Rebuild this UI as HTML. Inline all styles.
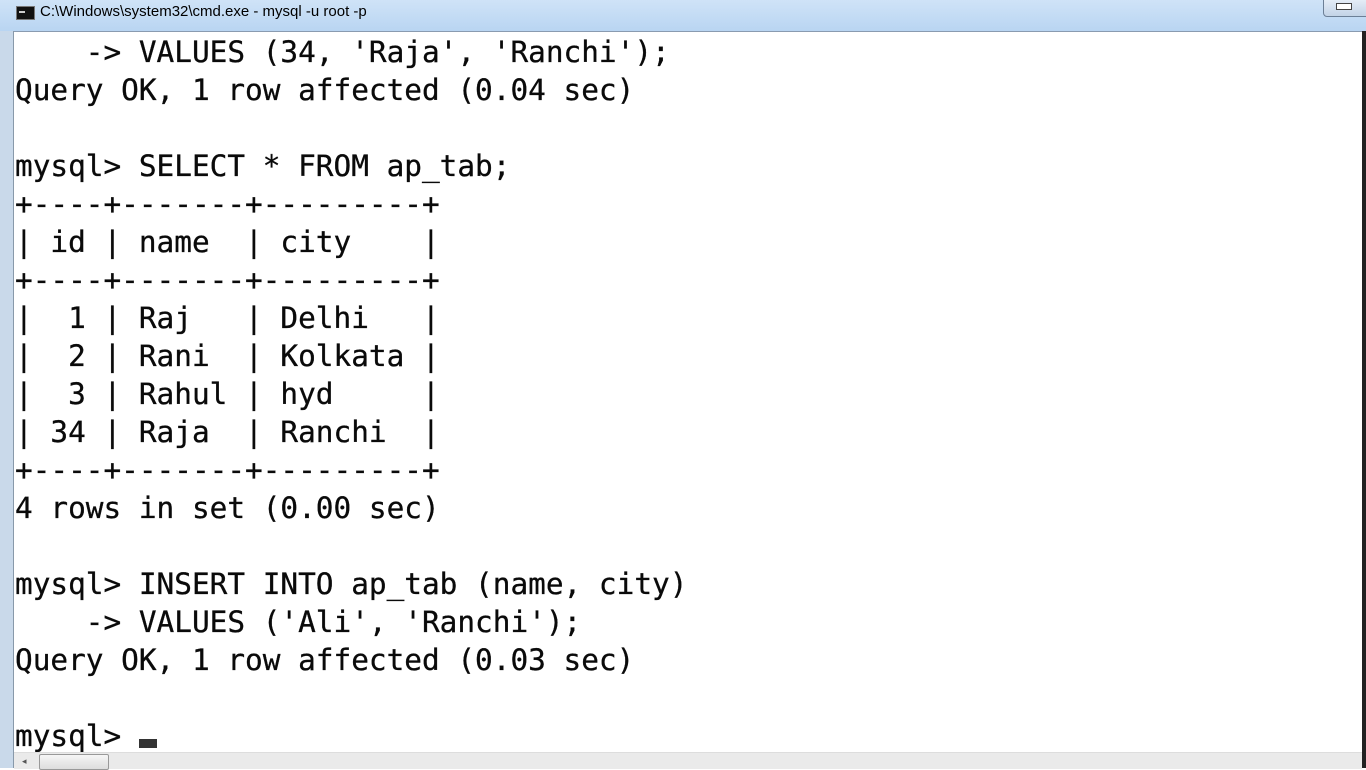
<!DOCTYPE html>
<html><head><style>
html,body{margin:0;padding:0;width:1366px;height:768px;overflow:hidden;background:#fff}
.title{position:absolute;left:0;top:0;width:1366px;height:31px;background:linear-gradient(#cfe3f7,#b9d5f2);border-bottom:1px solid #8a9bb0}
.title span{position:absolute;left:40px;top:3px;font:15px "Liberation Sans",sans-serif;color:#000}
.icon{position:absolute;left:16px;top:6px;width:17px;height:12px;background:#111;border:1px solid #777}
.icon:after{content:"";position:absolute;left:2px;top:4px;width:6px;height:2px;background:#ccc}
.btn{position:absolute;left:1323px;top:-2px;width:45px;height:17px;border:1px solid #6c7f96;border-radius:0 0 4px 4px;background:linear-gradient(#e6eef8,#c3d3e6)}
.btn:after{content:"";position:absolute;left:12px;top:4px;width:14px;height:5px;border:1px solid #444;background:#fff}
.lb{position:absolute;left:0;top:31px;width:13px;height:737px;background:#c9d9ea;border-right:1px solid #8899aa}
.rb{position:absolute;right:0;top:31px;width:4px;height:737px;background:#222}
pre{position:absolute;left:15px;top:33px;margin:0;font:29.4px/38px "DejaVu Sans Mono",monospace;color:#0a0a0a;-webkit-text-stroke:0.3px #0a0a0a}
.cur{display:inline-block;width:18px;height:9px;background:#333;vertical-align:-2px}
.sb{position:absolute;left:14px;top:752px;width:1348px;height:16px;background:#eaeaea;border-top:1px solid #ddd}
.thumb{position:absolute;left:39px;top:754px;width:68px;height:14px;background:linear-gradient(#f6f6f6,#ddd);border:1px solid #999;border-radius:2px}
.arr{position:absolute;left:22px;top:756px;font:9px sans-serif;color:#555}
</style></head><body>
<div class="title"><div class="icon"></div><span>C:\Windows\system32\cmd.exe - mysql  -u root -p</span><div class="btn"></div></div>
<div class="lb"></div><div class="rb"></div>
<pre>    -&gt; VALUES (34, 'Raja', 'Ranchi');
Query OK, 1 row affected (0.04 sec)

mysql&gt; SELECT * FROM ap_tab;
+----+-------+---------+
| id | name  | city    |
+----+-------+---------+
|  1 | Raj   | Delhi   |
|  2 | Rani  | Kolkata |
|  3 | Rahul | hyd     |
| 34 | Raja  | Ranchi  |
+----+-------+---------+
4 rows in set (0.00 sec)

mysql&gt; INSERT INTO ap_tab (name, city)
    -&gt; VALUES ('Ali', 'Ranchi');
Query OK, 1 row affected (0.03 sec)

mysql&gt; <span class="cur"></span></pre>
<div class="sb"></div><div class="thumb"></div><div class="arr">◂</div>
</body></html>
